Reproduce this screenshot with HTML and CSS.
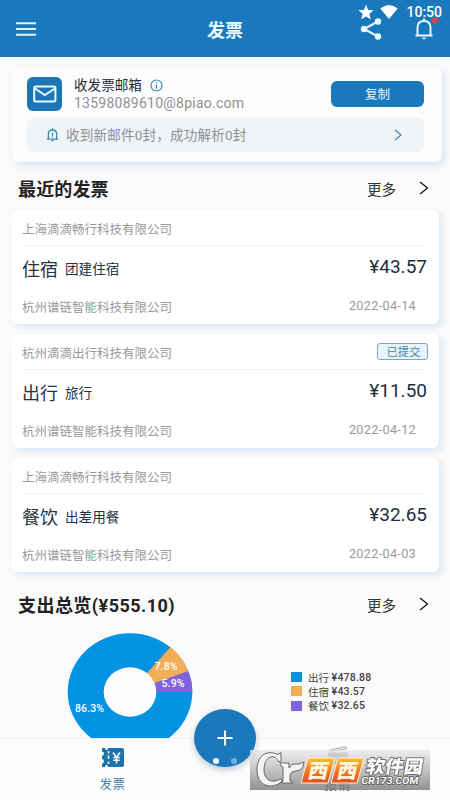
FILE: index.html
```html
<!DOCTYPE html>
<html lang="zh-CN">
<head>
<meta charset="utf-8">
<title>发票</title>
<link rel="stylesheet" href="styles.css">
</head>
<body>
<div class="app">
  <header class="topbar">
    <svg class="menu" width="20" height="14" viewBox="0 0 20 14"><path d="M0 1.3h20M0 7h20M0 12.7h20" stroke="#dcf5ff" stroke-width="2"/></svg>
    <h1>发票</h1>
    <svg class="share" width="22" height="22" viewBox="0 0 22 22"><path d="M18 3.5 4 11l14 7.500" fill="none" stroke="#e8f9ff" stroke-width="2"/><g fill="#e8f9ff"><circle cx="18" cy="3.500" r="3.200"/><circle cx="4" cy="11" r="3.200"/><circle cx="18" cy="18.500" r="3.200"/></g></svg>
    <svg class="bell" width="26" height="24" viewBox="0 0 26 24"><path d="M2.500 18.500h17M4.500 18V10.500C4.500 6.500 7 4 11 4s6.500 2.500 6.500 6.500V18M11 4V1.500" fill="none" stroke="#e8f9ff" stroke-width="2"/><path d="M8.800 20.500h4.400q-.5 1.800-2.200 1.800t-2.200-1.800z" fill="#e8f9ff"/><circle cx="22" cy="3.300" r="3.300" fill="#c94c55"/></svg>
    <div class="status">
      <svg width="16" height="16" viewBox="0 0 16 16"><path fill="#fff" d="m8 .5 2.100 5.400 5.500.4-4.200 3.500 1.300 5.500L8 12.400 3.300 15.300l1.300-5.500L.4 6.300l5.500-.4z"/></svg>
      <svg width="18" height="16" viewBox="0 0 18 16"><path fill="#fff" d="M.3 4.500Q9-2.500 17.700 4.500L9 15z"/></svg>
      <span>10:50</span>
    </div>
  </header>

  <main>
    <section class="mailbox">
      <div class="mail-row">
        <div class="mail-icon"><svg width="24" height="18" viewBox="0 0 24 18"><rect x="1.200" y="1.500" width="21.200" height="15" rx="1.500" fill="none" stroke="#e9fbff" stroke-width="2"/><path d="m2 3.500 9.800 6.500L22 3.500" fill="none" stroke="#e9fbff" stroke-width="2"/></svg></div>
        <div class="mail-info">
          <div class="mail-title">收发票邮箱 <svg width="13" height="13" viewBox="0 0 13 13"><circle cx="6.500" cy="6.500" r="5.500" fill="none" stroke="#2e86b5" stroke-width="1.100"/><path d="M6.500 5.700v4M6.500 3.200v1.300" stroke="#2e86b5" stroke-width="1.300"/></svg></div>
          <div class="mail-address">13598089610@8piao.com</div>
        </div>
        <button class="copy">复制</button>
      </div>
      <div class="notice">
        <svg width="13" height="14" viewBox="0 0 13 14"><path d="M.8 11.200h11.400M2.400 11V6c0-2.500 1.600-4 4.100-4s4.100 1.500 4.100 4v5M6.500 2V.3M6.500 4.700v3M6.500 8.400v1.200" fill="none" stroke="#338aad" stroke-width="1.300"/><path d="M5 12h3l-1.500 1.700z" fill="#338aad"/></svg>
        <span>收到新邮件0封，成功解析0封</span>
        <svg class="notice-arrow" width="8" height="12" viewBox="0 0 8 12"><path d="m1 1 6 5-6 5" fill="none" stroke="#4388a5" stroke-width="1.200"/></svg>
      </div>
    </section>

    <div class="section-head recent">
      <h2>最近的发票</h2><span>更多</span>
      <svg width="10" height="14" viewBox="0 0 10 14"><path d="m1 1 7.500 6L1 13" fill="none" stroke="#222" stroke-width="1.400"/></svg>
    </div>

    <div class="invoices">
      <article class="invoice">
        <div class="seller">上海滴滴畅行科技有限公司</div>
        <div class="detail"><b>住宿</b><span>团建住宿</span><strong>¥43.57</strong></div>
        <div class="buyer"><span>杭州谱链智能科技有限公司</span><time>2022-04-14</time></div>
      </article>
      <article class="invoice">
        <div class="seller">杭州滴滴出行科技有限公司<em>已提交</em></div>
        <div class="detail"><b>出行</b><span>旅行</span><strong>¥11.50</strong></div>
        <div class="buyer"><span>杭州谱链智能科技有限公司</span><time>2022-04-12</time></div>
      </article>
      <article class="invoice">
        <div class="seller">上海滴滴畅行科技有限公司</div>
        <div class="detail"><b>餐饮</b><span>出差用餐</span><strong>¥32.65</strong></div>
        <div class="buyer"><span>杭州谱链智能科技有限公司</span><time>2022-04-03</time></div>
      </article>
    </div>

    <div class="section-head spending">
      <h2>支出总览(¥555.10)</h2><span>更多</span>
      <svg width="10" height="14" viewBox="0 0 10 14"><path d="m1 1 7.500 6L1 13" fill="none" stroke="#222" stroke-width="1.400"/></svg>
    </div>

    <div class="overview">
      <svg class="donut" width="126" height="106" viewBox="0 0 126 106">
        <ellipse cx="63" cy="59" rx="62.300" ry="58.800" fill="#0492e2"/>
        <path d="M63 59 103.500 14A62.300 58.800 0 0 1 121.300 38.200z" fill="#f2ae57"/>
        <path d="M63 59 121.300 38.200A62.300 58.800 0 0 1 125.300 59z" fill="#8461df"/>
        <ellipse cx="63" cy="59" rx="26.300" ry="24.700" fill="#fcfcfd"/>
        <g class="donut-label"><text x="8" y="79.500" textLength="29">86.3%</text><text x="87.500" y="38" textLength="23">7.8%</text><text x="94.500" y="54.500" textLength="23">5.9%</text></g>
      </svg>
      <ul class="legend">
        <li><i class="travel"></i>出行 <b>¥478.88</b></li>
        <li><i class="hotel"></i>住宿 <b>¥43.57</b></li>
        <li><i class="food"></i>餐饮 <b>¥32.65</b></li>
      </ul>
    </div>
  </main>

  <nav class="tabs">
    <div class="tab active">
      <svg width="24" height="19" viewBox="0 0 24 19"><path fill="#1c74ad" d="M1 0h3q0 2 1.500 2T7 0h14q2 0 2 2v15q0 2-2 2H7q0-2-1.500-2T4 19H1v-3.500q2-.5 2-2.200T1 11V8q2-.7 2-2.300T1 3.500z"/><path d="M7.500 3v2.500M7.500 7.500V11M7.500 13.500V16" stroke="#fafdff" stroke-width="1.600"/><path d="m12 4.500 3.500 4.700L19 4.500M12.300 9.500h6.400M12.300 12.300h6.400M15.500 9v6.500" fill="none" stroke="#fafdff" stroke-width="1.500"/></svg>
      <span>发票</span>
    </div>
    <div class="tab reimburse">
      <svg width="22" height="19" viewBox="0 0 22 19"><path d="M1.500 4.500 18.500.5l1.500 2.500M3 5.500 20 2.500" fill="none" stroke="#aaa"/><path d="M1 6.500h20V18H1z" fill="#999"/></svg>
      <span>报销</span>
    </div>
  </nav>

  <button class="fab" aria-label="新增">
    <svg width="62" height="58" viewBox="0 0 62 58"><path d="M31 21.500v15M23.500 29h15" stroke="#fff" stroke-width="2"/><circle cx="22" cy="52" r="3" fill="#fff"/><circle cx="40" cy="52" r="3" fill="#76ade0"/></svg>
  </button>

  <svg class="watermark" width="180" height="40" viewBox="0 0 180 40">
    <defs>
      <linearGradient id="plate" x2="0" y2="1"><stop stop-color="#e8e8e8" stop-opacity=".75"/><stop offset=".5" stop-color="#b5b5b5" stop-opacity=".8"/><stop offset="1" stop-color="#777" stop-opacity=".8"/></linearGradient>
      <linearGradient id="orange" x2="0" y2="1"><stop stop-color="#ffc02c"/><stop offset=".5" stop-color="#f77b27"/><stop offset="1" stop-color="#e34a1d"/></linearGradient>
    </defs>
    <rect width="180" height="40" fill="url(#plate)"/>
    <path d="M31 12V2.500l-3 2C15-1 7 7 7 20c0 14 11 20 23 13l2-2-1.500-2C22 34 14 30 14 20 14 7 24 2 29 12zM31 13h8v5q3-5 6-4 3 1 9-2-1 9-8 9-5 0-6 4v6l3 2H31l2-2V17l-3-2z" fill="#f4f4f4" stroke="#666" stroke-width="1"/>
    <path d="M58 8h27l-7 25H51zM88 8h26l-7 25H81z" fill="url(#orange)" stroke="#fff3df" stroke-width="1"/>
    <g class="mark-xi"><text transform="translate(57 27.500) skewX(-12)" textLength="22">西</text><text transform="translate(86 27.500) skewX(-12)" textLength="22">西</text></g>
    <text class="mark-cn" transform="translate(115 23) skewX(-10)" textLength="57" lengthAdjust="spacingAndGlyphs">软件园</text>
    <text class="mark-url" transform="translate(111 34) skewX(-8)" textLength="57" lengthAdjust="spacingAndGlyphs">CR173.COM</text>
  </svg>
</div>
</body>
</html>
```
FILE: styles.css
```css
* { box-sizing: border-box; }
body { margin: 0; background: #fafafb; font-family: Roboto, "Noto Sans CJK SC", sans-serif; color: #222d3a; }
h1, h2, ul { margin: 0; padding: 0; }
button { border: 0; padding: 0; font-family: inherit; }
svg { display: block; flex: none; }
.app { position: relative; width: 450px; height: 800px; overflow: hidden; display: flex; flex-direction: column; }

.topbar { height: 57px; flex: none; background: #1a79bd; position: relative; display: flex; align-items: center; padding: 1px 10px 0 16px; }
.topbar h1 { flex: 1; padding: 4px 0 0 54px; text-align: center; font-size: 18px; line-height: 24px; font-weight: 700; color: #e9fbff; }
.share { margin-right: 31px; }
.bell { margin-right: 1px; }
.status { position: absolute; top: 4px; right: 8px; height: 16px; display: flex; align-items: center; gap: 6px; color: #fff; font-size: 14px; font-weight: 500; }
.status svg + svg { margin-right: 2px; }

main { flex: none; height: 681px; overflow: hidden; padding: 9px 11px 0 12px; }
.mailbox { width: 430px; height: 96px; padding: 11px 18px 0 15px; border-radius: 7px; background: #fcfcfd; box-shadow: 3px 4px 7px #dae6f5; }
.mail-row { display: flex; height: 34px; }
.mail-icon { width: 35px; height: 34px; margin-right: 12px; border-radius: 6px; background: #1b76b7; display: grid; place-items: center; }
.mail-info { flex: 1; }
.mail-title { display: flex; align-items: center; gap: 8px; height: 17px; font-size: 13.600px; line-height: 17px; }
.mail-address { font-size: 14px; line-height: 18px; letter-spacing: .25px; color: #929297; }
.copy { width: 93px; height: 26px; margin-top: 4px; padding-bottom: 1px; border-radius: 6px; background: #1a79bd; color: #e6f8ff; font-size: 12.500px; }
.notice { height: 34px; margin-top: 7px; padding: 0 22px 0 19px; border-radius: 6px; background: #eff4f8; display: flex; align-items: center; color: #8d9196; font-size: 13.600px; }
.notice span { flex: 1; margin: -2px 0 0 7px; letter-spacing: .15px; }

.section-head { height: 48px; display: flex; align-items: center; padding: 8px 10px 0 6px; }
.section-head h2 { flex: 1; font-size: 18px; line-height: 24px; font-weight: 700; color: #222; letter-spacing: .15px; }
.section-head span { margin: 1px 23px 0 0; font-size: 14.500px; line-height: 20px; color: #333; }
.section-head svg { margin-top: -4px; }

.invoices { display: grid; gap: 10px; width: 427px; }
.invoice { height: 114px; padding: 0 12px 0 10px; background: #fff; border-radius: 6px; box-shadow: 3px 3px 6px #dae8f5; color: #999; font-size: 12.500px; }
.seller { height: 36px; display: flex; align-items: center; justify-content: space-between; padding-top: 1px; border-bottom: 1px solid #f0f1f2; }
.seller em { width: 51px; height: 17px; margin: -1px -1px 0 0; padding-left: 2px; border: 1px solid #78a9bd; border-radius: 3px; background: #e8f4fa; color: #468ba6; font-style: normal; font-size: 11.300px; line-height: 17px; text-align: center; }
.detail { height: 43px; display: flex; align-items: center; color: #253341; }
.detail b { font-size: 18px; font-weight: 400; }
.detail span { margin-left: 7px; font-size: 13.600px; }
.detail strong { margin-left: auto; font-size: 19px; font-weight: 400; margin-top: -3px; color: #222d3a; }
.buyer { height: 35px; display: flex; align-items: center; justify-content: space-between; padding-right: 11px; }
.buyer time { margin-top: -2px; font-size: 12.700px; letter-spacing: .3px; }

.spending { height: 61px; padding-top: 7px; }
.spending h2 { letter-spacing: .45px; }
.overview { display: flex; }
.donut { margin-left: 55px; }
.donut-label { fill: #fff; font-size: 10.500px; font-weight: 500; transform: translateY(-1px); }
.legend { list-style: none; margin: 37px 0 0 98px; font-size: 10.500px; color: #444; }
.legend li { display: flex; align-items: center; height: 14.300px; white-space: pre; }
.legend b { font-weight: 500; letter-spacing: .2px; }
.legend i { width: 11px; height: 10px; margin-right: 6px; }
.travel { background: #0b90d9; }
.hotel { background: #f2ae57; }
.food { background: #8461df; }

.tabs { flex: 1; display: flex; justify-content: space-between; border-top: 1px solid #f0f0f0; background: #fcfcfd; }
.tab { width: 225px; display: flex; flex-direction: column; align-items: center; padding-top: 9px; gap: 9px; font-size: 12.500px; line-height: 18px; color: #555; }
.active { color: #397fa5; }
.tab span { letter-spacing: .5px; }
.reimburse { padding-top: 7px; gap: 12px; }

.fab { position: absolute; left: 194px; top: 709px; width: 62px; height: 58px; border-radius: 50%; background: #1a79bd; box-shadow: 0 3px 6px #bfc8d0; }
.watermark { position: absolute; left: 250px; top: 750px; }
.mark-xi { font: 900 20px "Noto Sans CJK SC", sans-serif; fill: #fff6de; }
.mark-cn { font: 900 18px "Noto Sans CJK SC", sans-serif; fill: #fff; stroke: #555; stroke-width: 1.500px; paint-order: stroke; }
.mark-url { font: 700 10px Roboto, sans-serif; fill: #fff; stroke: #555; stroke-width: 1.500px; paint-order: stroke; }
```
